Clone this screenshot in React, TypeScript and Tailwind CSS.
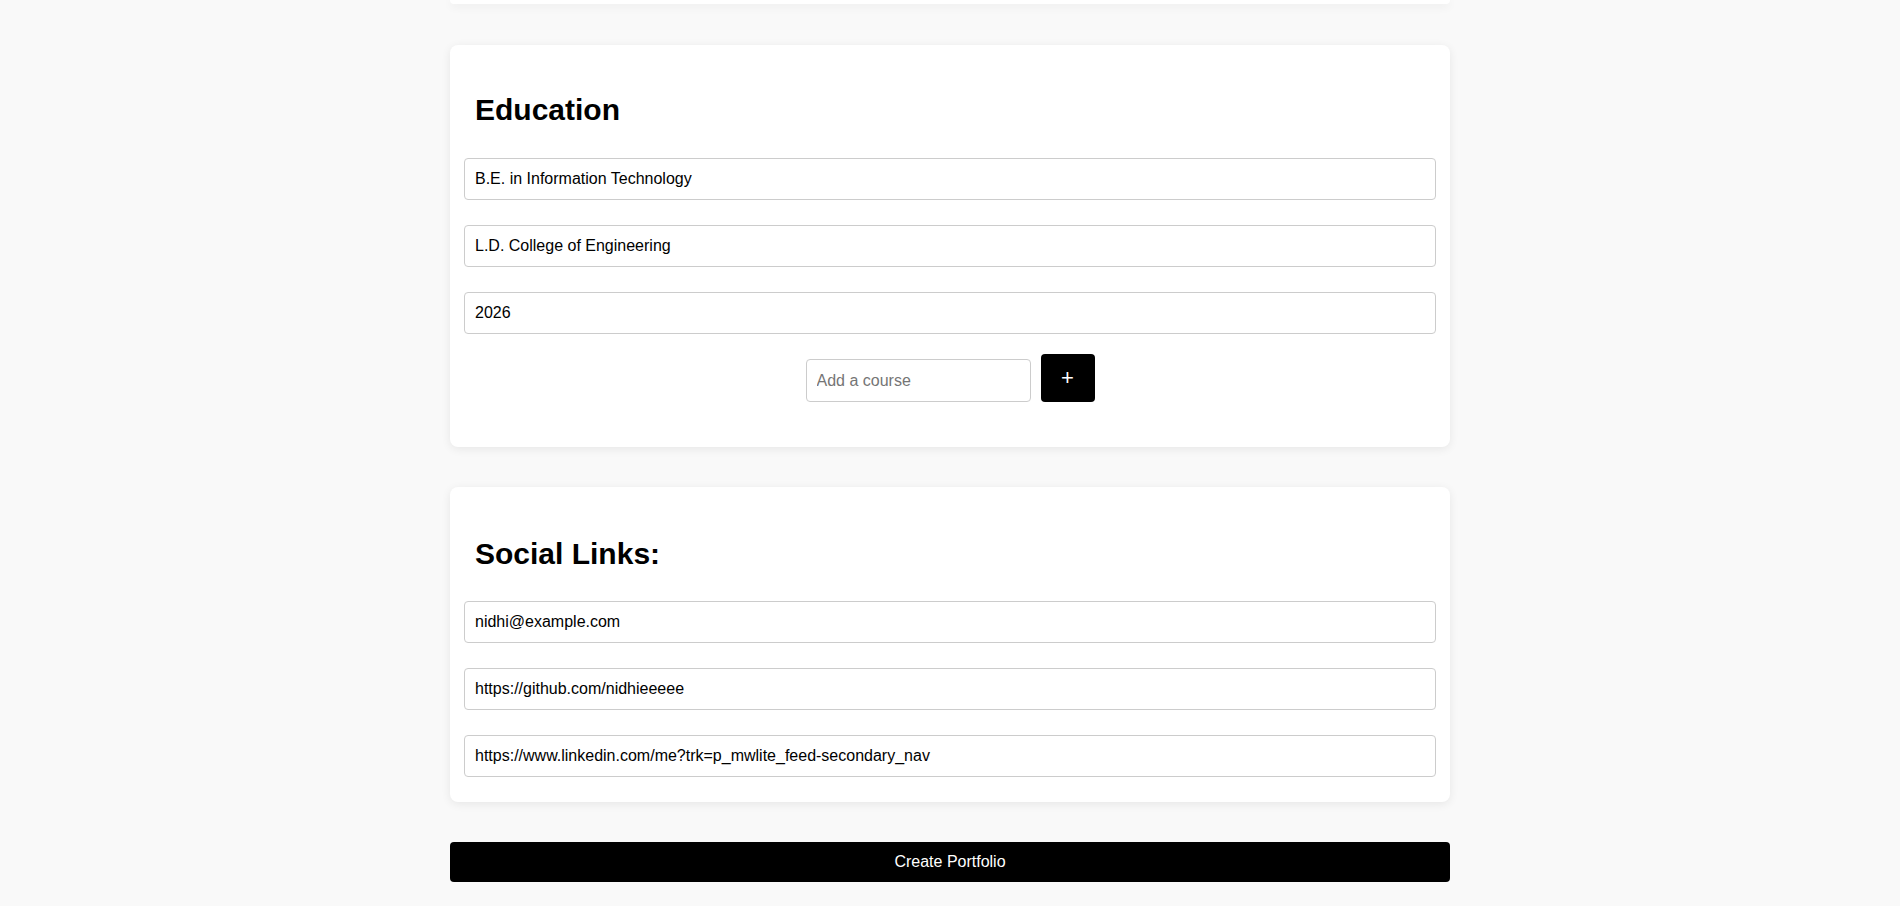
export default function App() {
  const inputCls =
    "block w-full h-[42px] border border-[#cccccc] rounded-[4px] px-[10px] text-[16px] text-black bg-white outline-none";
  const card =
    "w-[1000px] bg-white rounded-[8px] shadow-[0_2px_10px_rgba(0,0,0,0.08)] px-[14px]";
  return (
    <div className="min-h-[906px] bg-[#f9f9f9] flex flex-col items-center" style={{ fontFamily: '"Liberation Sans", Arial, sans-serif' }}>
      <div className="w-[1000px] h-[4px] bg-white rounded-b-[8px] shadow-[0_2px_10px_rgba(0,0,0,0.08)]" />
      <div className={card + " mt-[41px] pt-[47px] pb-[45px]"}>
        <h2 className="text-[30px] leading-[36px] font-bold text-black ml-[11px] mb-[30px]">Education</h2>
        <div className="flex flex-col gap-[25px]">
          <input className={inputCls} defaultValue="B.E. in Information Technology" />
          <input className={inputCls} defaultValue="L.D. College of Engineering" />
          <input className={inputCls} defaultValue="2026" />
        </div>
        <div className="flex justify-center items-end gap-[10px] mt-[20px]">
          <input className="w-[225px] h-[43px] border border-[#cccccc] rounded-[4px] px-[10px] text-[16px] bg-white outline-none placeholder:text-[#757575]" placeholder="Add a course" />
          <button className="w-[54px] h-[48px] bg-black text-white rounded-[4px] text-[22px] leading-none">+</button>
        </div>
      </div>
      <div className={card + " mt-[40px] pt-[49px] pb-[25px]"}>
        <h2 className="text-[30px] leading-[36px] font-bold text-black ml-[11px] mb-[29px]">Social Links:</h2>
        <div className="flex flex-col gap-[25px]">
          <input className={inputCls} defaultValue="nidhi@example.com" />
          <input className={inputCls} defaultValue="https://github.com/nidhieeeee" />
          <input className={inputCls} defaultValue="https://www.linkedin.com/me?trk=p_mwlite_feed-secondary_nav" />
        </div>
      </div>
      <button className="w-[1000px] h-[40px] mt-[40px] bg-black text-white rounded-[4px] text-[16px]">Create Portfolio</button>
    </div>
  );
}
